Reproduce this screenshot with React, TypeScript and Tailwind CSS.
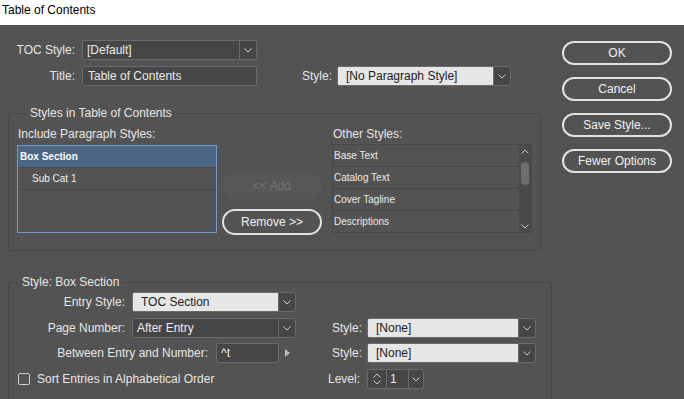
import React from 'react';

const Chevron = ({ up = false }: { up?: boolean }) => (
  <svg width="8" height="5" viewBox="0 0 8 5" className="block">
    <polyline
      points={up ? '0.5,4.5 4,1 7.5,4.5' : '0.5,0.5 4,4 7.5,0.5'}
      fill="none"
      stroke="#cdcdcd"
      strokeWidth="1"
    />
  </svg>
);

type SelectProps = { value: string; light?: boolean; className: string };

const Select = ({ value, light, className }: SelectProps) => (
  <div className={`flex h-[20px] overflow-hidden rounded-[2px] border border-[#6b6b6b] ${className}`}>
    <div
      className={`flex flex-1 items-center ${
        light ? 'bg-[#e6e6e6] pl-[8px] text-[#1c1c1c]' : 'bg-[#464646] pl-[4px] text-[#ececec]'
      }`}
    >
      {value}
    </div>
    <div className="flex w-[17px] items-center justify-center border-l border-[#6b6b6b] bg-[#464646]">
      <Chevron />
    </div>
  </div>
);

const DialogButton = ({ children }: { children: React.ReactNode }) => (
  <button className="flex h-[24px] w-[110px] items-center justify-center rounded-full border-2 border-[#e2e2e2] text-[12px] text-[#f0f0f0]">
    {children}
  </button>
);

const includeStyles = [
  { name: 'Box Section', selected: true },
  { name: 'Sub Cat 1', selected: false },
];

const otherStyles = ['Base Text', 'Catalog Text', 'Cover Tagline', 'Descriptions'];

export default function App() {
  return (
    <div className="flex h-[399px] w-[684px] flex-col overflow-hidden bg-[#535353] font-['Liberation_Sans',Arial,sans-serif] text-[12px] text-[#e6e6e6]">
      {/* window title */}
      <div className="flex h-[25px] shrink-0 items-start bg-white pl-[2px] pt-[3px] text-[12px] leading-[14px] text-black">
        Table of Contents
      </div>

      <div className="flex flex-1">
        {/* left side */}
        <div className="w-[552px] shrink-0 pt-[15px]">
          <div className="flex h-[20px] items-center">
            <span className="w-[75px] text-right">TOC Style:</span>
            <Select value="[Default]" className="ml-[7px] w-[175px]" />
          </div>

          <div className="mt-[6px] flex h-[20px] items-center">
            <span className="w-[75px] text-right">Title:</span>
            <div className="ml-[7px] flex h-[20px] w-[175px] items-center rounded-[2px] border border-[#6b6b6b] bg-[#464646] pl-[5px] text-[#ececec]">
              Table of Contents
            </div>
            <span className="ml-[43px] w-[32px] text-right">Style:</span>
            <Select value="[No Paragraph Style]" light className="ml-[5px] w-[174px]" />
          </div>

          <fieldset className="ml-[8px] mt-[19px] w-[533px] rounded-[3px] border border-[#474747] pb-[15px] pl-[8px] pt-[6px]">
            <legend className="ml-[9px] px-[4px] leading-[16px]">Styles in Table of Contents</legend>
            <div className="flex">
              <div className="flex w-[200px] flex-col">
                <span className="pl-[1px] leading-[14px]">Include Paragraph Styles:</span>
                <div className="mt-[4px] h-[88px] border border-[#6a9ad0] text-[10px]">
                  {includeStyles.map((s) => (
                    <div
                      key={s.name}
                      className={`flex h-[22px] items-center border-b border-[#484848] ${
                        s.selected ? 'bg-[#4b6682] pl-[2px] font-bold text-white' : 'pl-[14px] text-[#f2f2f2]'
                      }`}
                    >
                      {s.name}
                    </div>
                  ))}
                </div>
              </div>

              <div className="ml-[5px] flex w-[100px] flex-col pt-[46px]">
                <div className="flex h-[26px] items-center justify-center rounded-full bg-[#575757] text-[12px] text-[#747474]">
                  &lt;&lt; Add
                </div>
                <button className="mt-[10px] flex h-[26px] items-center justify-center rounded-full border-2 border-[#e2e2e2] text-[12px] text-[#f0f0f0]">
                  Remove &gt;&gt;
                </button>
              </div>

              <div className="ml-[10px] flex w-[200px] flex-col">
                <span className="pl-[1px] leading-[14px]">Other Styles:</span>
                <div className="mt-[3px] flex h-[89px] border border-[#474747] text-[10px]">
                  <div className="flex-1">
                    {otherStyles.map((s) => (
                      <div key={s} className="flex h-[22px] items-center border-b border-[#474747] pl-[1px] text-[#ececec]">
                        {s}
                      </div>
                    ))}
                  </div>
                  <div className="flex w-[12px] flex-col items-center bg-[#4a4a4a] pt-[4px]">
                    <Chevron up />
                    <div className="mt-[8px] h-[23px] w-[8px] rounded-full bg-[#6e6e6e]" />
                    <div className="mt-auto pb-[3px]">
                      <Chevron />
                    </div>
                  </div>
                </div>
              </div>
            </div>
          </fieldset>

          <fieldset className="ml-[8px] mt-[23px] w-[544px] rounded-[3px] border border-[#474747] pb-[20px] pt-[2px]">
            <legend className="ml-[9px] px-[4px] leading-[16px]">Style: Box Section</legend>

            <div className="flex h-[20px] items-center">
              <span className="w-[116px] text-right">Entry Style:</span>
              <Select value="TOC Section" light className="ml-[7px] w-[164px]" />
            </div>

            <div className="mt-[6px] flex h-[20px] items-center">
              <span className="w-[116px] text-right">Page Number:</span>
              <Select value="After Entry" className="ml-[7px] w-[164px]" />
              <span className="w-[66px] text-right">Style:</span>
              <Select value="[None]" light className="ml-[5px] w-[169px]" />
            </div>

            <div className="mt-[5px] flex h-[20px] items-center">
              <span className="w-[199px] text-right">Between Entry and Number:</span>
              <div className="ml-[8px] flex h-[20px] w-[63px] items-center rounded-[2px] border border-[#6b6b6b] bg-[#464646] pl-[4px] text-[#ececec]">
                ^t
              </div>
              <div className="flex w-[17px] justify-center">
                <svg width="5" height="8" viewBox="0 0 5 8">
                  <polygon points="0,0 5,4 0,8" fill="#bdbdbd" />
                </svg>
              </div>
              <span className="w-[66px] text-right">Style:</span>
              <Select value="[None]" light className="ml-[5px] w-[169px]" />
            </div>

            <div className="mt-[6px] flex h-[20px] items-center">
              <div className="flex w-[287px] items-center pl-[9px]">
                <div className="h-[12px] w-[12px] rounded-[2px] border border-[#cfcfcf]" />
                <span className="ml-[7px]">Sort Entries in Alphabetical Order</span>
              </div>
              <span className="w-[64px] text-right">Level:</span>
              <div className="ml-[7px] flex h-[20px] w-[57px] overflow-hidden rounded-[2px] border border-[#6b6b6b] bg-[#464646]">
                <div className="flex w-[19px] flex-col items-center justify-center gap-[2px] border-r border-[#6b6b6b]">
                  <Chevron up />
                  <Chevron />
                </div>
                <div className="flex w-[21px] items-center pl-[3px] text-[#ececec]">1</div>
                <div className="flex flex-1 items-center justify-center border-l border-[#6b6b6b]">
                  <Chevron />
                </div>
              </div>
            </div>
          </fieldset>
        </div>

        {/* right buttons */}
        <div className="flex flex-col gap-[12px] pl-[10px] pt-[16px]">
          <DialogButton>OK</DialogButton>
          <DialogButton>Cancel</DialogButton>
          <DialogButton>Save Style...</DialogButton>
          <DialogButton>Fewer Options</DialogButton>
        </div>
      </div>
    </div>
  );
}
